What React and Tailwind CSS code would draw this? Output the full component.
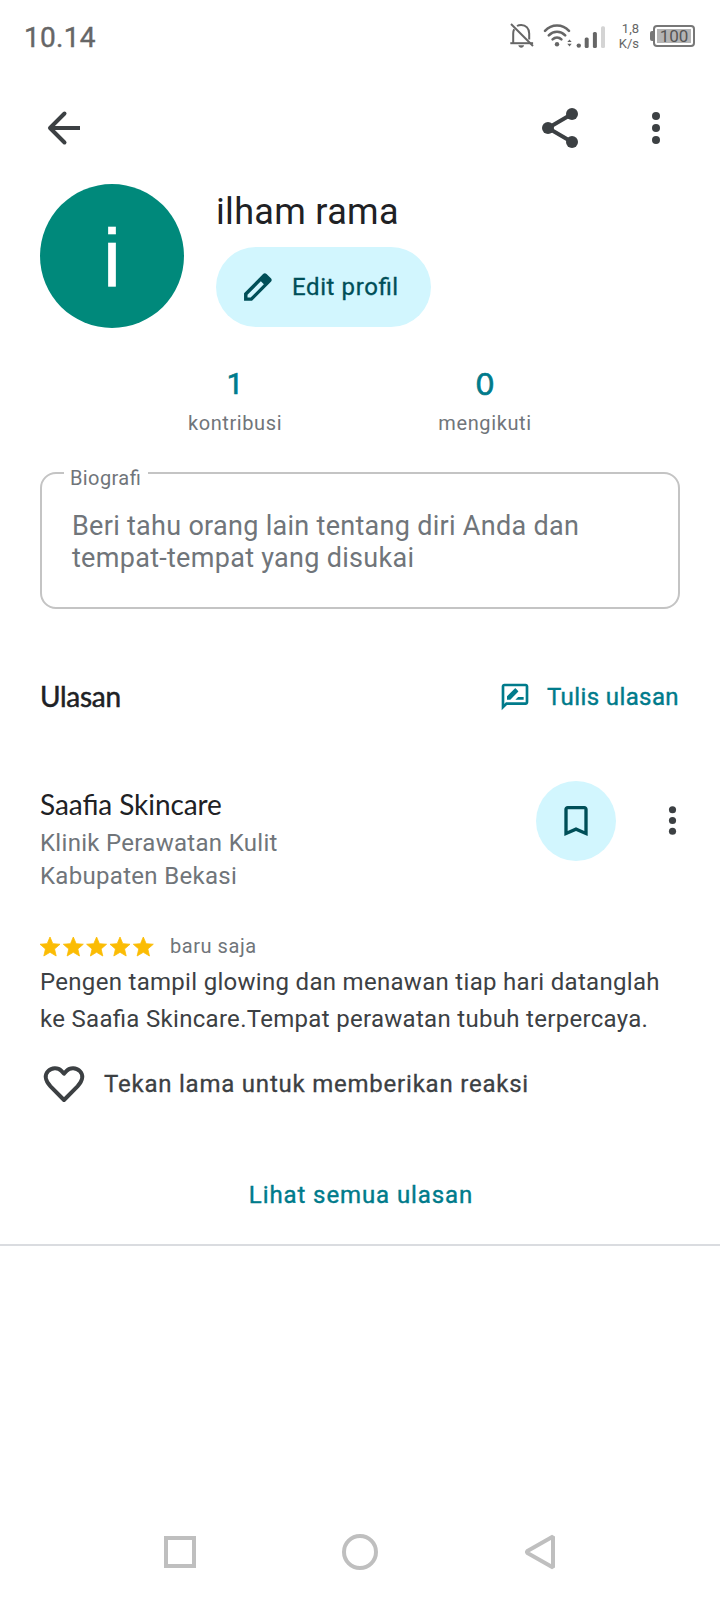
const ROBOTO = "font-['Roboto',sans-serif]";
const LATO = "font-['Lato',sans-serif]";

function StatusIcons() {
  return (
    <svg width="97" height="32" viewBox="508 20 97 32" fill="none" stroke="#666" strokeWidth="2">
      <path d="M510.3 43.2h22.8" />
      <path d="M513.2 43V33.5c0-1.6.3-3 1-4.200M517 26c1.200-.7 2.600-1 4.200-1 4.800 0 8 3.500 8 8.500v6" />
      <path d="M511 24l22 22" />
      <path d="M518.300 45.300h5.800c-.3 1.500-1.400 2.500-2.900 2.500s-2.600-1-2.900-2.500z" fill="#666" stroke="none" />
      <g strokeWidth="2.600" strokeLinecap="round">
        <path d="M545 30.800c6.600-7 17.400-7 24 0" />
        <path d="M548.800 35.300c4.600-4.700 11.800-4.700 16.400 0" />
        <path d="M552.600 39.400c2.500-2.400 6.300-2.400 8.800 0" />
      </g>
      <circle cx="557" cy="44.300" r="2.200" fill="#666" stroke="none" />
      <path d="M567.300 42l2.200-2.600 2.200 2.600zM567.300 43.800l2.200 2.600 2.200-2.600z" fill="#666" stroke="none" />
      <g stroke="none" fill="#666">
        <circle cx="578.800" cy="45.600" r="2.200" />
        <rect x="584.700" y="37.500" width="4" height="10.500" rx="1.500" />
        <rect x="592.900" y="32" width="4" height="16" rx="1.500" />
        <rect x="601" y="26.300" width="4" height="21.700" rx="1.500" fill="#d4d4d4" />
      </g>
    </svg>
  );
}

function StatusBar() {
  return (
    <div className={`${ROBOTO} flex h-[74px] items-center pr-[25px] pl-6 text-[#666]`}>
      <span className="mt-[2px] text-[28px] leading-8 tracking-[0.300px] [-webkit-text-stroke:0.4px_#666]">10.14</span>
      <div className="mb-[2px] ml-auto flex items-center">
        <StatusIcons />
        <div className="ml-[13px] flex w-[21px] flex-col items-end text-[13px] leading-[15px] whitespace-nowrap">
          <span>1,8</span>
          <span>K/s</span>
        </div>
        <div className="ml-[11px] flex items-center">
          <span className="h-[10px] w-[3px] rounded-l-[2px] bg-[#777]" />
          <span className="flex h-[22px] w-[42px] rounded-[4px] border-2 border-[#777] p-[2px]">
            <span className="flex flex-1 items-center justify-center bg-[#b4b4b4] text-[17px] leading-none text-[#555]">
              100
            </span>
          </span>
        </div>
      </div>
    </div>
  );
}

function MoreDots({ size }) {
  return (
    <svg width={size} height={size} viewBox="0 0 24 24" fill="#3c4043">
      <circle cx="12" cy="6" r="2" />
      <circle cx="12" cy="12" r="2" />
      <circle cx="12" cy="18" r="2" />
    </svg>
  );
}

function AppBar() {
  return (
    <div className="flex h-[108px] items-center px-10">
      <svg width="48" height="48" viewBox="0 0 48 48" fill="none" stroke="#3c4043" strokeWidth="4">
        <path d="M24.500 9.500L10 24l14.500 14.500" strokeLinejoin="round" strokeLinecap="round" />
        <path d="M10 24h30" />
      </svg>
      <svg className="ml-auto" width="48" height="48" viewBox="0 0 24 24" fill="#3c4043">
        <path d="M18 5L6 12l12 7" fill="none" stroke="#3c4043" strokeWidth="2" />
        <circle cx="18" cy="5" r="3" />
        <circle cx="6" cy="12" r="3" />
        <circle cx="18" cy="19" r="3" />
      </svg>
      <div className="ml-12">
        <MoreDots size={48} />
      </div>
    </div>
  );
}

function Profile() {
  return (
    <div className="flex px-10 pt-[2px]">
      <div className="flex size-36 items-center justify-center rounded-full bg-[#00897b] font-['Liberation_Sans',sans-serif] text-[81px] leading-none text-white">
        <span className="mt-1 [-webkit-text-stroke:0.6px_white]">i</span>
      </div>
      <div className="ml-8 flex flex-col items-start">
        <h1 className={`${ROBOTO} h-[63px] text-[36px] leading-[56px] tracking-[0.320px] text-[#202124]`}>ilham rama</h1>
        <button className={`${ROBOTO} flex h-20 w-[215px] items-center rounded-full bg-[#d2f6fe] pl-6 text-[#004f58]`}>
          <svg width="36" height="36" viewBox="0 0 24 24" fill="#004f58" fillRule="evenodd">
            <path d="M2.700 16.200V21.100H8L20.600 8.500c.7-.7.7-1.600 0-2.300L17.700 3.300c-.7-.7-1.600-.7-2.300 0zM5 19v-1.900L13.900 8.200l2 2L7.100 19z" />
          </svg>
          <span className="ml-4 text-[24px] leading-8 tracking-[0.600px] [font-feature-settings:'liga'_1] [-webkit-text-stroke:0.3px_#004f58]">
            Edit profil
          </span>
        </button>
      </div>
    </div>
  );
}

function Stat({ value, label, valueClass }) {
  return (
    <div className="flex w-[250px] flex-col items-center">
      <span className={`${valueClass} text-[#007b8b] [-webkit-text-stroke:0.7px_#007b8b]`}>{value}</span>
      <span className={`${ROBOTO} mt-[11px] text-[20px] leading-6 tracking-[0.600px] text-[#70757a]`}>{label}</span>
    </div>
  );
}

function Stats() {
  return (
    <div className="flex justify-center pt-10">
      <Stat value="1" label="kontribusi" valueClass="font-['Roboto',sans-serif] text-[29px] leading-8" />
      <Stat value="0" label="mengikuti" valueClass="font-['Lato',sans-serif] -mt-px mb-px text-[30px] leading-8" />
    </div>
  );
}

function Biography() {
  return (
    <div className={`${ROBOTO} relative mx-10 mt-[37px] h-[137px] rounded-[16px] border-2 border-[#c4c4c4] pt-9 pl-[30px] text-[#70757a]`}>
      <span className="absolute -top-2 left-[22px] w-[84px] bg-white pl-[6px] text-[20px] leading-6 tracking-[0.400px] [font-feature-settings:'liga'_1]">
        Biografi
      </span>
      <p className="text-[27px] leading-8 tracking-[0.290px] whitespace-nowrap">
        Beri tahu orang lain tentang diri Anda dan
        <br />
        tempat-tempat yang disukai
      </p>
    </div>
  );
}

function ReviewsHeader() {
  return (
    <div className="mt-[68px] flex h-9 items-center px-10">
      <h2 className={`${LATO} mt-[2px] text-[28px] leading-9 tracking-[-0.300px] text-[#202124] [-webkit-text-stroke:0.5px_#202124]`}>
        Ulasan
      </h2>
      <button className={`${ROBOTO} ml-auto flex items-center text-[#007b8b]`}>
        <svg className="mt-1" width="32" height="32" viewBox="0 0 24 24" fill="#007b8b">
          <path d="M20 2H4c-1.100 0-2 .9-2 2v18l4-4h14c1.100 0 2-.9 2-2V4c0-1.100-.9-2-2-2zm0 14H5.170L4 17.170V4h16v12z" />
          <path d="M12.300 14h6.200v-2h-4.200zM6 14h2.470l5.880-5.880c.2-.2.2-.51 0-.71l-1.770-1.770c-.2-.2-.51-.2-.71 0L6 11.530V14z" />
        </svg>
        <span className="mt-[3px] mr-px ml-4 text-[24px] leading-8 tracking-[0.400px] [-webkit-text-stroke:0.4px_#007b8b]">Tulis ulasan</span>
      </button>
    </div>
  );
}

function Place() {
  return (
    <div className="mt-[68px] flex h-[111px] items-start pl-10">
      <div className="pt-[5px]">
        <h3 className={`${LATO} text-[28px] leading-9 tracking-[-0.080px] text-[#202124] [font-feature-settings:'liga'_1]`}>Saafia Skincare</h3>
        <p className={`${ROBOTO} mt-[5px] text-[24px] leading-[33px] tracking-[0.300px] text-[#70757a]`}>
          Klinik Perawatan Kulit
          <br />
          Kabupaten Bekasi
        </p>
      </div>
      <div className="ml-auto flex size-20 items-center justify-center rounded-full bg-[#d2f6fe]">
        <svg width="40" height="40" viewBox="0 0 24 24" fill="#004f58">
          <path d="M17 3H7c-1.100 0-2 .9-2 2v16l7-3 7 3V5c0-1.100-.9-2-2-2zm0 15l-5-2.180L7 18V5h10v13z" />
        </svg>
      </div>
      <div className="mt-[18px] mr-[26px] ml-[35px]">
        <MoreDots size={43} />
      </div>
    </div>
  );
}

function Review() {
  return (
    <div className={`${ROBOTO} mt-[43px] px-10`}>
      <div className="flex h-6 items-center">
        <svg width="118" height="24" viewBox="0 0 118 24" fill="#fbbc04" stroke="#fbbc04" strokeWidth="0.800">
          {[0, 23.3, 46.6, 70, 93.3].map((x) => (
            <path
              key={x}
              transform={`translate(${x - 2} -0.500)`}
              d="M12 17.770L18.180 21.500l-1.640-7.030L22 9.740l-7.190-.61L12 2.500 9.190 9.130 2 9.740l5.460 4.730-1.640 7.030z"
            />
          ))}
        </svg>
        <span className="mb-[2px] ml-3 text-[20px] leading-6 tracking-[0.550px] text-[#70757a]">baru saja</span>
      </div>
      <p className="mt-[5px] text-[24px] leading-[37px] tracking-[0.300px] whitespace-nowrap text-[#3c4043] [font-feature-settings:'liga'_1]">
        Pengen tampil glowing dan menawan tiap hari datanglah
        <br />
        ke Saafia Skincare.Tempat perawatan tubuh terpercaya.
      </p>
      <div className="mt-[22px] flex h-12 items-center text-[#3c4043]">
        <svg width="48" height="48" viewBox="0 0 48 48" fill="none" stroke="#3c4043" strokeWidth="4" strokeLinejoin="round">
          <path d="M24 40L10.500 26.400C4.500 20 4.800 14.500 8.100 11.200c3.600-3.800 9.800-4 13.300-.3L24 13.700l2.600-2.800c3.500-3.700 9.700-3.500 13.300.3 3.300 3.300 3.600 8.800-2.400 15.200z" />
        </svg>
        <span className="mb-px ml-4 text-[24px] leading-8 tracking-[0.780px] whitespace-nowrap [-webkit-text-stroke:0.3px_#3c4043]">
          Tekan lama untuk memberikan reaksi
        </span>
      </div>
    </div>
  );
}

function NavBar() {
  return (
    <div className="grid h-24 grid-cols-3 items-center justify-items-center px-[90px]">
      <span className="size-8 border-4 border-[#bfbfbf]" />
      <span className="size-9 rounded-full border-4 border-[#bfbfbf]" />
      <svg width="32" height="36" viewBox="0 0 32 36" fill="none" stroke="#bfbfbf" strokeWidth="4">
        <path d="M29 2.500v31L3 18.800v-1.600z" strokeLinejoin="bevel" />
      </svg>
    </div>
  );
}

export default function App() {
  return (
    <div className="flex h-[1600px] w-[720px] flex-col overflow-hidden bg-white">
      <StatusBar />
      <AppBar />
      <Profile />
      <Stats />
      <Biography />
      <ReviewsHeader />
      <Place />
      <Review />
      <button
        className={`${ROBOTO} mt-[71px] border-b-2 border-[#dadce0] pb-[33px] pl-[2px] text-center text-[24px] leading-8 tracking-[0.900px] text-[#007b8b] [-webkit-text-stroke:0.4px_#007b8b]`}
      >
        Lihat semua ulasan
      </button>
      <div className="mt-auto">
        <NavBar />
      </div>
    </div>
  );
}
